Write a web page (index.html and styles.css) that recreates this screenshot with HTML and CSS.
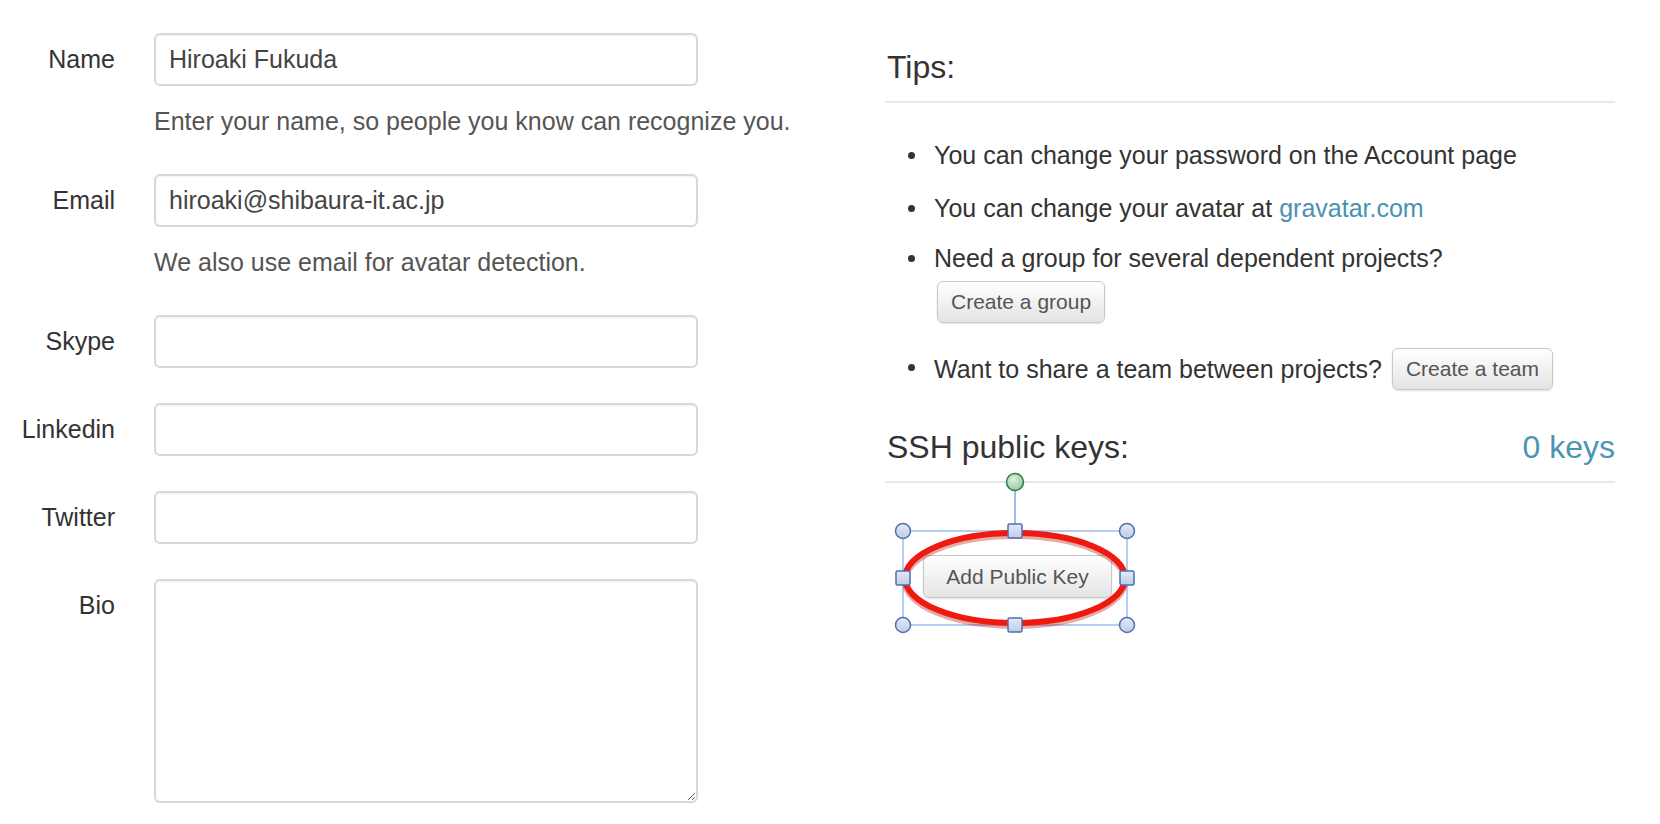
FILE: index.html
```html
<!DOCTYPE html>
<html lang="en">
<head>
<meta charset="utf-8">
<title>Profile settings</title>
<link rel="stylesheet" href="styles.css">
</head>
<body>
<div class="page">
  <form class="form-col">
    <div class="group">
      <label class="label">Name</label>
      <div class="controls">
        <input class="field" type="text" value="Hiroaki Fukuda">
        <p class="hint">Enter your name, so people you know can recognize you.</p>
      </div>
    </div>
    <div class="group">
      <label class="label">Email</label>
      <div class="controls">
        <input class="field" type="text" value="hiroaki@shibaura-it.ac.jp">
        <p class="hint">We also use email for avatar detection.</p>
      </div>
    </div>
    <div class="group">
      <label class="label">Skype</label>
      <div class="controls"><input class="field" type="text"></div>
    </div>
    <div class="group">
      <label class="label">Linkedin</label>
      <div class="controls"><input class="field" type="text"></div>
    </div>
    <div class="group">
      <label class="label">Twitter</label>
      <div class="controls"><input class="field" type="text"></div>
    </div>
    <div class="group">
      <label class="label">Bio</label>
      <div class="controls"><textarea class="field area"></textarea></div>
    </div>
  </form>

  <aside class="side-col">
    <h3 class="side-title">Tips:</h3>
    <ul class="tips">
      <li class="tip">You can change your password on the Account page</li>
      <li class="tip tip-2">You can change your avatar at <a class="link" href="#">gravatar.com</a></li>
      <li class="tip tip-3">Need a group for several dependent projects?
        <div class="btn-row"><button class="btn" type="button">Create a group</button></div>
      </li>
      <li class="tip tip-4"><span>Want to share a team between projects?</span><button class="btn" type="button">Create a team</button></li>
    </ul>

    <h3 class="side-title ssh-title"><span>SSH public keys:</span><span class="count">0 keys</span></h3>
    <div class="key-action">
      <button class="btn btn-key" type="button">Add Public Key</button>
      <svg class="annot" width="250" height="170" viewBox="0 0 250 170" xmlns="http://www.w3.org/2000/svg">
        <defs>
          <radialGradient id="gh" cx="0.4" cy="0.35" r="0.7">
            <stop offset="0" stop-color="#dff1e2"/>
            <stop offset="1" stop-color="#8cc99a"/>
          </radialGradient>
          <linearGradient id="hb" x1="0" y1="0" x2="0" y2="1">
            <stop offset="0" stop-color="#e4ebf7"/>
            <stop offset="1" stop-color="#bccbe6"/>
          </linearGradient>
        </defs>
        <line x1="125" y1="21" x2="125" y2="54" stroke="#7ea6e6" stroke-width="1.5"/>
        <rect x="13" y="61" width="224" height="94" fill="none" stroke="#9dbcf0" stroke-width="1.5"/>
        <ellipse cx="125" cy="109" rx="110" ry="45" fill="none" stroke="#b01008" stroke-opacity="0.35" stroke-width="7" transform="translate(0 1.5)"/>
        <ellipse cx="125" cy="108" rx="110" ry="45" fill="none" stroke="#f0190f" stroke-width="6"/>
        <g fill="url(#hb)" stroke="#4f6fae" stroke-width="1.5">
          <circle cx="13" cy="61" r="7.5"/>
          <circle cx="237" cy="61" r="7.5"/>
          <circle cx="13" cy="155" r="7.5"/>
          <circle cx="237" cy="155" r="7.5"/>
          <rect x="118" y="54" width="14" height="14" rx="1.5"/>
          <rect x="6" y="101" width="14" height="14" rx="1.5"/>
          <rect x="230" y="101" width="14" height="14" rx="1.5"/>
          <rect x="118" y="148" width="14" height="14" rx="1.5"/>
        </g>
        <circle cx="125" cy="12" r="8.5" fill="url(#gh)" stroke="#2f7d40" stroke-width="1.5"/>
      </svg>
    </div>
  </aside>
</div>
</body>
</html>
```

FILE: styles.css
```css
html, body {
  margin: 0;
  padding: 0;
  background: #ffffff;
}

body {
  font-family: "Liberation Sans", Arial, Helvetica, sans-serif;
  font-size: 25px;
  color: #333333;
}

.page {
  display: flex;
  align-items: flex-start;
  gap: 187px;
  padding-top: 33px;
}

/* ---------- left form ---------- */
.form-col {
  width: 698px;
  flex: none;
  display: flex;
  flex-direction: column;
  gap: 35px;
  margin: 0;
}

.group {
  display: flex;
  align-items: flex-start;
  gap: 39px;
}

.label {
  width: 115px;
  flex: none;
  text-align: right;
  line-height: 53px;
  color: #333333;
}

.controls {
  width: 544px;
  display: flex;
  flex-direction: column;
}

.field {
  box-sizing: border-box;
  width: 544px;
  height: 53px;
  margin: 0;
  padding: 0 13px;
  font-family: "Liberation Sans", Arial, Helvetica, sans-serif;
  font-size: 25px;
  color: #444444;
  background: #ffffff;
  border: 2px solid #d8d8d8;
  border-radius: 6px;
  box-shadow: inset 0 1px 2px rgba(0, 0, 0, 0.06);
  outline: none;
}

.area {
  height: 224px;
  padding: 10px 13px;
  resize: vertical;
  display: block;
}

.hint {
  margin: 17px 0 0;
  line-height: 36px;
  color: #555555;
  white-space: nowrap;
}

/* ---------- right column ---------- */
.side-col {
  width: 730px;
  flex: none;
  padding-top: 14px;
}

.side-title {
  margin: 0;
  font-size: 32px;
  font-weight: normal;
  line-height: 40px;
  color: #333333;
  padding-bottom: 14px;
  border-bottom: 2px solid #e8e8e8;
  padding-left: 2px;
}

.tips {
  margin: 34px 0 0;
  padding: 0 0 0 49px;
  list-style: none;
}

.tip {
  line-height: 36px;
  margin-bottom: 17px;
}

.tip::before {
  content: "";
  display: inline-block;
  width: 7px;
  height: 7px;
  border-radius: 50%;
  background: #333333;
  margin-left: -26px;
  margin-right: 19px;
  vertical-align: middle;
  position: relative;
  top: -2px;
}

.tip-2 {
  margin-bottom: 14px;
}

.tip-3 {
  margin-bottom: 25px;
}

.tip-4 span {
  vertical-align: middle;
}

.tip-4 .btn {
  margin-left: 10px;
  vertical-align: middle;
}

.btn-row {
  padding: 5px 0 0 3px;
  line-height: 0;
}

.link {
  color: #4b91b3;
  text-decoration: none;
}

.btn {
  box-sizing: border-box;
  height: 42px;
  padding: 0 13px;
  font-family: "Liberation Sans", Arial, Helvetica, sans-serif;
  font-size: 21px;
  color: #555555;
  background: linear-gradient(#ffffff, #e4e4e4);
  border: 1.5px solid #c9c9c9;
  border-radius: 6px;
  box-shadow: 0 1px 2px rgba(0, 0, 0, 0.12);
  cursor: pointer;
}

.ssh-title {
  margin-top: 37px;
  display: flex;
  justify-content: space-between;
}

.count {
  color: #4b95b5;
}

.key-action {
  position: relative;
  margin: 72px 0 0 38px;
  width: 189px;
  height: 43px;
}

.btn-key {
  width: 189px;
  height: 43px;
  font-size: 21px;
}

.annot {
  position: absolute;
  left: -33px;
  top: -85px;
  pointer-events: none;
}
```
